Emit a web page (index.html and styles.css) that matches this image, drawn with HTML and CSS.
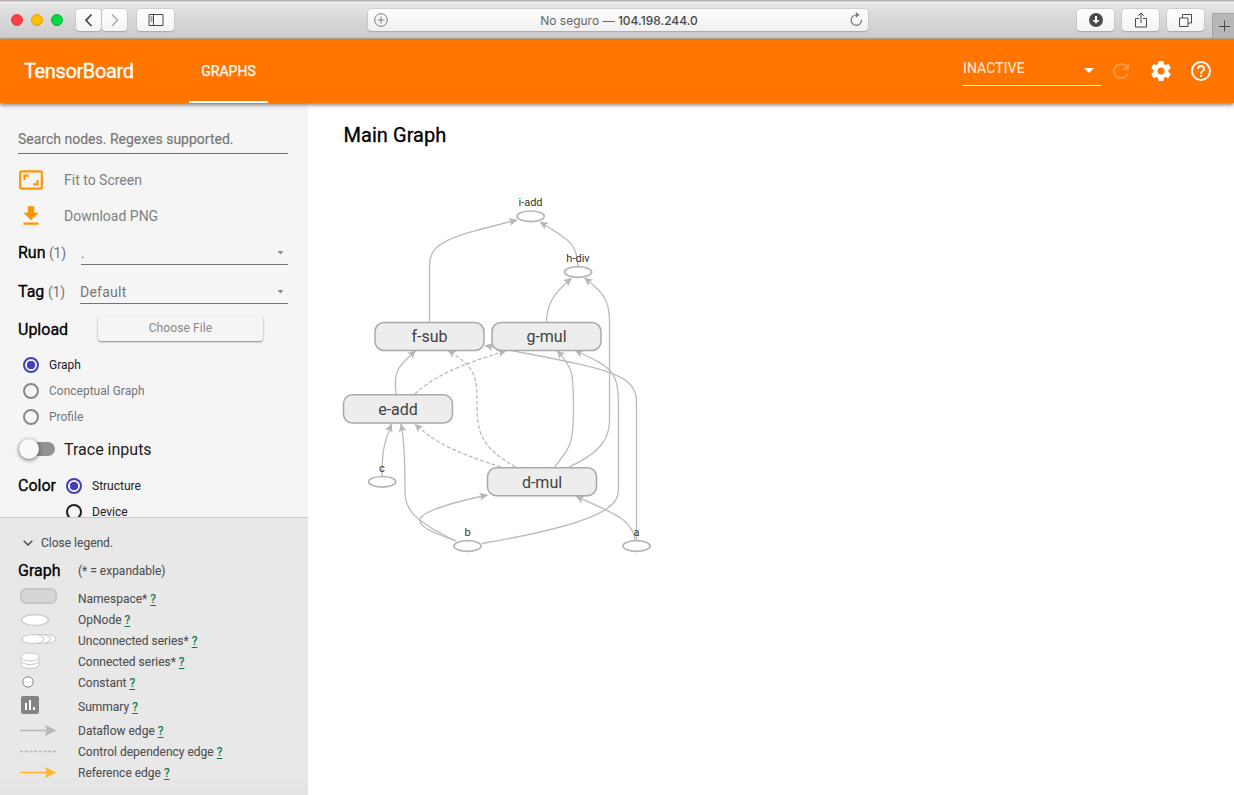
FILE: index.html
```
<!DOCTYPE html>
<html lang="es">
<head>
<meta charset="utf-8">
<title>TensorBoard</title>
<link rel="stylesheet" href="styles.css">
</head>
<body>
<div class="window">
  <div class="chrome">
    <div class="lights"><i class="light red"></i><i class="light yellow"></i><i class="light green"></i></div>
    <div class="nav">
      <span class="btn nav-btn"><svg width="26" height="22" viewBox="0 0 26 22"><path d="M15.500 5.500 10 11.300 15.500 17" fill="none" stroke="#444" stroke-width="1.700"/></svg></span>
      <span class="btn nav-btn"><svg width="26" height="22" viewBox="0 0 26 22"><path d="M10 5.500 15.500 11.300 10 17" fill="none" stroke="#aaa" stroke-width="1.500"/></svg></span>
    </div>
    <span class="btn side-btn"><svg width="16" height="12" viewBox="0 0 16 12"><path d="M1 .500h14v11H1zM5.500.500v11M2.500 3h2M2.500 5h2M2.500 7h2" fill="none" stroke="#4a4a4a"/></svg></span>
    <div class="address">
      <svg width="14" height="14" viewBox="0 0 14 14" fill="none" stroke="#7a7a7a"><circle cx="7" cy="7" r="6.300"/><path d="M7 3.500v7M3.500 7h7"/></svg>
      <span class="url">No seguro — <b>104.198.244.0</b></span>
      <svg class="refresh" width="13" height="15" viewBox="0 0 13 15"><path d="M11.500 7.800A5.200 5.200 0 1 1 6.600 3" fill="none" stroke="#7a7a7a" stroke-width="1.200"/><path d="M5.800 0 9.600 2.900 5.800 5.800z" fill="#7a7a7a"/></svg>
    </div>
    <div class="tools">
      <span class="btn tool"><svg width="14" height="14" viewBox="0 0 14 14"><circle cx="7" cy="7" r="7" fill="#4a4a4a"/><path d="M6 3h2v4h2.600L7 10.800 3.400 7H6z" fill="#fff"/></svg></span>
      <span class="btn tool"><svg width="12" height="16" viewBox="0 0 12 16" fill="none" stroke="#4a4a4a"><path d="M4 6.500H.500v8.500h11V6.500H8M6 11V1.200M3.300 3.800 6 1l2.700 2.800"/></svg></span>
      <span class="btn tool"><svg width="13" height="13" viewBox="0 0 13 13" fill="none" stroke="#4a4a4a"><path d="M.500 4h8.500v8.500H.500zM3.500 4V.500h9V9H9"/></svg></span>
    </div>
    <div class="newtab"><svg width="12" height="12" viewBox="0 0 12 12"><path d="M5.500 .500v11M0 6.500h11" stroke="#4a4a4a" fill="none"/></svg></div>
  </div>

  <header class="toolbar">
    <div class="brand">TensorBoard</div>
    <div class="tab">GRAPHS</div>
    <div class="inactive"><span>INACTIVE</span><svg width="10" height="5" viewBox="0 0 10 5"><path d="M0 0h10L5 5z" fill="#fff"/></svg></div>
    <div class="actions">
      <svg class="reload" width="24" height="24" viewBox="0 0 24 24"><path d="M17.650 6.350A7.950 7.950 0 0 0 12 4a8 8 0 1 0 7.730 10h-2.080A6 6 0 1 1 12 6c1.660 0 3.140.690 4.220 1.780L13 11h7V4z"/></svg>
      <svg width="24" height="24" viewBox="0 0 24 24"><path d="M19.430 12.980c.040-.320.070-.640.070-.980s-.030-.660-.070-.980l2.110-1.650c.190-.150.240-.420.120-.640l-2-3.460c-.120-.220-.390-.300-.610-.220l-2.490 1c-.520-.400-1.080-.730-1.690-.980l-.380-2.650C14.460 2.180 14.250 2 14 2h-4c-.250 0-.460.180-.490.420l-.380 2.650c-.610.250-1.170.590-1.690.980l-2.490-1c-.230-.090-.490 0-.610.220l-2 3.460c-.130.220-.070.490.120.640l2.110 1.650c-.040.320-.070.650-.070.980s.030.660.070.980l-2.110 1.650c-.190.150-.240.420-.120.640l2 3.460c.120.220.390.300.610.220l2.490-1c.520.400 1.080.730 1.690.980l.380 2.650c.030.240.240.420.490.420h4c.250 0 .460-.180.490-.420l.380-2.650c.610-.250 1.170-.590 1.690-.980l2.490 1c.230.090.490 0 .610-.220l2-3.460c.120-.220.070-.490-.120-.640zM12 15.500a3.500 3.500 0 1 1 0-7 3.500 3.500 0 0 1 0 7z"/></svg>
      <svg width="24" height="24" viewBox="0 0 24 24"><path d="M11 18h2v-2h-2zm1-16a10 10 0 1 0 0 20 10 10 0 0 0 0-20zm0 18a8 8 0 1 1 0-16 8 8 0 0 1 0 16zm0-14a4 4 0 0 0-4 4h2a2 2 0 1 1 4 0c0 2-3 1.750-3 5h2c0-2.250 3-2.500 3-5a4 4 0 0 0-4-4z"/></svg>
    </div>
  </header>

  <main class="content">
    <aside class="sidebar">
      <section class="controls">
        <div class="search">Search nodes. Regexes supported.</div>
        <div class="action"><svg width="26" height="26" viewBox="0 0 24 24"><path d="M19 12h-2v3h-3v2h5zM7 9h3V7H5v5h2zm14-6H3a2 2 0 0 0-2 2v14c0 1.100.900 2 2 2h18a2 2 0 0 0 2-2V5a2 2 0 0 0-2-2zm0 16H3V5h18z"/></svg><span>Fit to Screen</span></div>
        <div class="action"><svg width="26" height="26" viewBox="0 0 24 24"><path d="M19 9h-4V3H9v6H5l7 7zM5 18v2h14v-2z"/></svg><span>Download PNG</span></div>
        <div class="field"><strong>Run</strong><small>(1)</small><div class="select run">.<svg width="7" height="4" viewBox="0 0 7 4"><path d="M.500 0h6L3.500 3.500z"/></svg></div></div>
        <div class="field tag-field"><strong>Tag</strong><small>(1)</small><div class="select">Default<svg width="7" height="4" viewBox="0 0 7 4"><path d="M.500 0h6L3.500 3.500z"/></svg></div></div>
        <div class="upload"><strong>Upload</strong><span class="file">Choose File</span></div>
        <div class="radios">
          <div class="radio on"><i></i>Graph</div>
          <div class="radio off"><i></i>Conceptual Graph</div>
          <div class="radio off"><i></i>Profile</div>
        </div>
        <div class="trace"><span class="toggle"><i></i></span>Trace inputs</div>
        <div class="color"><strong>Color</strong><div><div class="radio on"><i></i>Structure</div><div class="radio"><i></i>Device</div></div></div>
      </section>
      <section class="legend">
        <div class="close"><svg width="10" height="6" viewBox="0 0 10 6"><path d="M.700.700 5 5 9.300.700" fill="none" stroke="#555" stroke-width="1.600"/></svg>Close legend.</div>
        <div class="legend-title"><strong>Graph</strong><span>(* = expandable)</span></div>
        <div class="item"><svg width="60" height="21"><rect x="3" y="1" width="35" height="14" rx="5" fill="#d6d6d6" stroke="#c6c6c6" stroke-width="2"/></svg><span>Namespace* <a>?</a></span></div>
        <div class="item"><svg width="60" height="21"><ellipse cx="17" cy="11" rx="13.500" ry="5.500" fill="#fff" stroke="#ccc" stroke-width="1.500"/></svg><span>OpNode <a>?</a></span></div>
        <div class="item"><svg width="60" height="21" fill="#fff" stroke="#ccc" stroke-width="1.200"><ellipse cx="27" cy="9" rx="11" ry="4.500"/><ellipse cx="21.500" cy="9" rx="11" ry="4.500"/><ellipse cx="15" cy="9" rx="11" ry="4.500"/></svg><span>Unconnected series* <a>?</a></span></div>
        <div class="item"><svg width="60" height="21" fill="#fff" stroke="#c6c6c6"><ellipse cx="12" cy="13.500" rx="9.300" ry="4"/><ellipse cx="12" cy="9.500" rx="9.300" ry="4"/><ellipse cx="12" cy="6" rx="9.300" ry="4"/></svg><span>Connected series* <a>?</a></span></div>
        <div class="item"><svg width="60" height="21"><circle cx="10" cy="10" r="5.200" fill="#fff" stroke="#848484"/></svg><span>Constant <a>?</a></span></div>
        <div class="item summary"><svg width="60" height="27"><rect x="3" y="3" width="18" height="18" rx="2" fill="#848484"/><path d="M7 10h2v7H7zM11 7h2v10h-2zM15 14h2v3h-2z" fill="#fff"/></svg><span>Summary <a>?</a></span></div>
        <div class="item"><svg width="60" height="21"><path d="M2 10.500h27" stroke="#b7b7b7" stroke-width="1.500"/><path d="m26.500 4.800 12 5.700-12 5.700 2.800-5.700z" fill="#b7b7b7"/></svg><span>Dataflow edge <a>?</a></span></div>
        <div class="item"><svg width="60" height="21"><path d="M2 10.500h36" stroke="#b7b7b7" stroke-width="1.300" stroke-dasharray="3 1.700"/></svg><span>Control dependency edge <a>?</a></span></div>
        <div class="item"><svg width="60" height="21"><path d="M2 10.500h27" stroke="#ffb42e" stroke-width="1.500"/><path d="m26.500 4.800 12 5.700-12 5.700 2.800-5.700z" fill="#ffb42e"/></svg><span>Reference edge <a>?</a></span></div>
      </section>
    </aside>

    <section class="stage">
      <h1>Main Graph</h1>
      <svg class="graph" width="340" height="380" viewBox="330 190 340 380">
        <defs>
          <marker id="arrow" markerWidth="10" markerHeight="8" refX="8" refY="4" orient="auto" markerUnits="userSpaceOnUse"><path d="M0 0 8.500 4 0 8 2 4z" fill="#b7b7b7"/></marker>
        </defs>
        <g class="edges">
          <path d="M429.500 322V266C429.500 242 449 237 517 220"/>
          <path d="M578 266C577 244 570 240 540 222"/>
          <path d="M546.500 322C547 304 553 294 571.500 278"/>
          <path d="M569 467C598 454 609.500 440 609.500 421V321C609.500 300 603 292 584.500 278"/>
          <path d="M396 394C393 370 399 366 415.500 350.500"/>
          <path class="dashed" d="M415 394C433 377 458 365 506 351"/>
          <path class="dashed" d="M515.500 467C485 449 478 438 477 409C477 373 476 369 448 350"/>
          <path class="dashed" d="M501 467C460 454 436 444 415 424"/>
          <path d="M554.500 467C570 448 573.500 444 573.500 410C573.500 372 573 368 557 350.500"/>
          <path d="M482 543.500C618 520 618.500 502 618.500 487V407C618.500 371 613 368 575 350.500"/>
          <path d="M636.500 540V402C636.500 371 600 368 485 345.500"/>
          <path d="M635 540C633 520 614 513 576 496.500"/>
          <path d="M456 541C407 524 399 514 487.500 495"/>
          <path d="M456 541C407 518 405 506 405 488C405 458 404 438 401 424"/>
          <path d="M382 476C382 450 384 444 391.500 424"/>
        </g>
        <g class="boxes">
          <rect x="375" y="322.500" width="109" height="28" rx="9"/>
          <rect x="492" y="322.500" width="109" height="28" rx="9"/>
          <rect x="343.500" y="394.800" width="109" height="28.300" rx="9"/>
          <rect x="487.500" y="467.700" width="109" height="28" rx="9"/>
        </g>
        <g class="ops">
          <ellipse cx="530.700" cy="216.300" rx="13.600" ry="5.300"/>
          <ellipse cx="578" cy="272" rx="13.600" ry="5.300"/>
          <ellipse cx="382.200" cy="481.800" rx="13.600" ry="5.300"/>
          <ellipse cx="467.500" cy="546" rx="13.600" ry="5.300"/>
          <ellipse cx="636.500" cy="546" rx="13.600" ry="5.300"/>
        </g>
        <g class="box-labels"><text x="429.500" y="342">f-sub</text><text x="546.500" y="342">g-mul</text><text x="398" y="415">e-add</text><text x="542" y="488">d-mul</text></g>
        <g class="op-labels"><text x="530.500" y="206">i-add</text><text x="578" y="262">h-div</text><text x="382" y="472">c</text><text x="467.500" y="536">b</text><text x="636.500" y="536">a</text></g>
      </svg>
    </section>
  </main>
</div>
</body>
</html>
```

FILE: styles.css
```
* { box-sizing: border-box; }
body { margin: 0; font-family: Roboto, "Liberation Sans", sans-serif; background: #fff; }
svg { display: block; flex: none; }
.window { width: 1234px; height: 795px; display: flex; flex-direction: column; overflow: hidden; }

.chrome { height: 39px; flex: none; display: flex; align-items: flex-start; padding: 9px 0 0 11px; background: linear-gradient(#b4b2b5 0 1px, #f3f3f3 2px, #e4e4e4 4px, #cbcbcb); border-bottom: 1px solid #b0a8a0; }
.lights { display: flex; gap: 8px; padding-top: 5px; width: 65px; }
.light { width: 12px; height: 12px; border-radius: 50%; }
.red { background: #fc4140; border: 1px solid #e33e3c; }
.yellow { background: #ffbd05; border: 1px solid #e2a100; }
.green { background: #00d742; border: 1px solid #00b936; }
.btn { display: flex; align-items: center; justify-content: center; height: 22px; border-radius: 4px; background: linear-gradient(#fff, #f3f3f3); box-shadow: 0 0 0 .5px #bdbdbd, 0 1px 1px #999; }
.nav { display: flex; gap: 1px; }
.nav-btn { width: 25px; }
.side-btn { width: 37px; margin-left: 10px; }
.address { display: flex; align-items: center; justify-content: space-between; width: 500px; height: 22px; margin-left: 194px; padding: 0 5px 0 6px; border-radius: 4px; background: linear-gradient(#fdfdfd, #f0f0f0); box-shadow: 0 0 0 .5px #bdbdbd, 0 1px 1px #999; }
.refresh { margin-top: -1px; }
.url { font: 12px Inter, sans-serif; color: #666; padding-top: 1px; }
.url b { font-weight: 500; color: #4a4a4a; }
.tools { display: flex; gap: 8px; margin-left: 209px; }
.tool { width: 37px; }
.newtab { display: flex; align-items: center; justify-content: center; width: 22px; height: 25px; margin: 4px 0 0 8px; flex: none; background: #b7b7b7; border-left: 1px solid #a3a3a3; border-top: 1px solid #a3a3a3; padding-left: 2px; }

.toolbar { height: 64px; flex: none; display: flex; background: #ff7500; color: #fff; padding-left: 24px; box-shadow: 0 2px 4px rgba(0,0,0,.5); position: relative; z-index: 1; }
.brand { width: 165px; font-size: 20px; line-height: 64px; letter-spacing: -.38px; -webkit-text-stroke: .35px; }
.tab { width: 79px; text-align: center; font-size: 14px; letter-spacing: .05px; line-height: 64px; -webkit-text-stroke: .25px; border-bottom: 2px solid #fff; }
.inactive { display: flex; align-items: center; justify-content: space-between; width: 138px; height: 33px; margin: 14px 0 0 695px; padding: 0 7px 2px 0; border-bottom: 1px solid #fff; font-size: 14px; letter-spacing: .1px; color: rgba(255,255,255,.8); -webkit-text-stroke: .15px; }
.inactive svg { margin-top: 4px; }
.actions { display: flex; gap: 16px; align-items: center; margin-left: 8px; fill: #fff; }
.reload { opacity: .25; }

.content { flex: 1; display: flex; min-height: 0; }
.sidebar { width: 308px; display: flex; flex-direction: column; background: #f5f5f5; }
.sidebar strong { font-size: 16px; font-weight: 400; -webkit-text-stroke: .3px; color: #000; }
.controls { height: 414px; flex: none; padding: 23px 20px 0 18px; overflow: hidden; }
.search { height: 28px; line-height: 27px; border-bottom: 1px solid #737373; color: #757575; font-size: 14px; -webkit-text-stroke: .15px; margin-bottom: 8px; }
.action { height: 36px; display: flex; align-items: center; gap: 20px; font-size: 14px; color: #808080; fill: #ff9500; }
.field { height: 36px; display: flex; align-items: center; }
.field strong { width: 27px; }
.field small { width: 33px; padding: 1px 0 0 4px; font-size: 14px; letter-spacing: -.2px; color: #777; }
.tag-field { margin-top: 3px; }
.tag-field small { padding-left: 3px; }
.select { display: flex; flex: 1; height: 25px; align-items: center; justify-content: space-between; border-bottom: 1px solid #737373; padding: 3px 4px 0 2px; font-size: 14px; letter-spacing: .25px; color: #757575; fill: #8a8a8a; }
.select svg { margin-top: -1px; }
.run { margin-left: 3px; padding-left: 0; }
.tag-field .select { margin-left: 2px; padding-left: 0; }
.upload { height: 36px; margin-top: 2px; display: flex; align-items: center; }
.upload strong { width: 80px; }
.file { width: 165px; height: 25px; line-height: 25px; text-align: center; font-size: 12px; letter-spacing: .1px; color: #888; border-radius: 3px; margin-top: -1px; box-shadow: 0 1px 2px rgba(0,0,0,.45); }
.radios { margin: 5px 0 0 5px; }
.radio { height: 26px; display: flex; align-items: center; gap: 10px; font-size: 12px; color: #222; }
.radio i { width: 16px; height: 16px; border: 2px solid #222; border-radius: 50%; }
.radio.on i { border-color: #453fb9; background: radial-gradient(circle, #453fb9 0 4px, transparent 4.5px); }
.radio.off { color: #757575; }
.radio.off i { border-color: #888; }
.trace { height: 38px; display: flex; align-items: center; font-size: 16px; color: #212121; }
.toggle { width: 36px; height: 14px; margin: 0 9px 0 1px; border-radius: 7px; background: #929292; display: flex; align-items: center; }
.toggle i { width: 20px; height: 20px; border-radius: 50%; background: #fafafa; box-shadow: 0 1px 4px rgba(0,0,0,.6); }
.color { display: flex; margin-top: 5px; }
.color strong { width: 48px; line-height: 26px; }
.legend { flex: 1; background: linear-gradient(#e8e8e8 92%, #e3e3e3); border-top: 1px solid #c8c8c8; padding: 11px 0 0 18px; color: #505050; font-size: 12px; -webkit-text-stroke: .1px; }
.close { display: flex; align-items: center; gap: 8px; height: 27px; padding-left: 5px; }
.legend-title { display: flex; align-items: center; height: 31px; margin: -1px 0 2px; }
.legend-title strong { width: 60px; }
.item { display: flex; height: 21px; align-items: center; }
.item.summary { height: 27px; }
.item a { color: #0b7a43; -webkit-text-stroke: .2px; text-decoration: underline; text-underline-offset: 2px; }

.stage { flex: 1; padding: 21px 0 0 22px; }
h1 { margin: 0 0 43px 13.5px; height: 23px; font-size: 20px; line-height: 23px; font-weight: 400; -webkit-text-stroke: .3px; letter-spacing: .05px; color: #000; }
.edges { fill: none; stroke: #bbb; stroke-width: 1.3; }
.edges path { marker-end: url(#arrow); }
.edges .dashed { stroke-dasharray: 4 2; }
.boxes { fill: #ededed; stroke: #a9a9a9; stroke-width: 1.5; }
.ops { fill: #fff; stroke: #b5b5b5; stroke-width: 1.7; }
.box-labels { font-size: 16px; fill: #424242; text-anchor: middle; }
.op-labels { font-size: 11px; fill: #333; text-anchor: middle; }
```
